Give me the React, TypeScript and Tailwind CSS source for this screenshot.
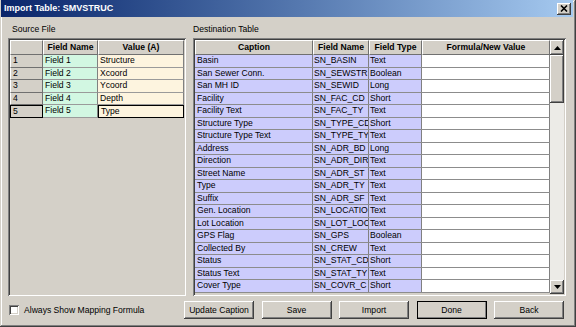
import React from "react";

const raised =
  "bg-[#d4d0c8] shadow-[inset_-1px_-1px_#404040,inset_1px_1px_#ffffff,inset_-2px_-2px_#808080,inset_2px_2px_#d4d0c8]";
const sunken =
  "shadow-[inset_1px_1px_#808080,inset_-1px_-1px_#ffffff,inset_2px_2px_#404040,inset_-2px_-2px_#d4d0c8]";

const srcRows = [
  ["1", "Field 1", "Structure"],
  ["2", "Field 2", "Xcoord"],
  ["3", "Field 3", "Ycoord"],
  ["4", "Field 4", "Depth"],
  ["5", "Field 5", "Type"],
];

const dstRows = [
  ["Basin", "SN_BASIN", "Text"],
  ["San Sewer Conn.", "SN_SEWSTR", "Boolean"],
  ["San MH ID", "SN_SEWID", "Long"],
  ["Facility", "SN_FAC_CD", "Short"],
  ["Facility Text", "SN_FAC_TY", "Text"],
  ["Structure Type", "SN_TYPE_CD", "Short"],
  ["Structure Type Text", "SN_TYPE_TY", "Text"],
  ["Address", "SN_ADR_BD", "Long"],
  ["Direction", "SN_ADR_DIR", "Text"],
  ["Street Name", "SN_ADR_ST", "Text"],
  ["Type", "SN_ADR_TY", "Text"],
  ["Suffix", "SN_ADR_SF", "Text"],
  ["Gen. Location", "SN_LOCATIO", "Text"],
  ["Lot Location", "SN_LOT_LOC", "Text"],
  ["GPS Flag", "SN_GPS", "Boolean"],
  ["Collected By", "SN_CREW", "Text"],
  ["Status", "SN_STAT_CD", "Short"],
  ["Status Text", "SN_STAT_TY", "Text"],
  ["Cover Type", "SN_COVR_C", "Short"],
];

function Head({ w, children }: { w: string; children?: React.ReactNode }) {
  return (
    <div
      className={`${w} h-[15px] shrink-0 flex items-center justify-center bg-[#d4d0c8] border-t border-l border-t-white border-l-white border-r border-b border-r-[#707070] border-b-[#707070] font-bold text-[8.6px] text-black overflow-hidden whitespace-nowrap`}
    >
      {children}
    </div>
  );
}

function Cell({
  w,
  bg,
  children,
  extra = "",
  pl = "pl-[2px]",
}: {
  w: string;
  bg: string;
  children?: React.ReactNode;
  extra?: string;
  pl?: string;
}) {
  return (
    <div
      className={`${w} ${bg} ${pl} h-full shrink-0 flex items-center border-r border-r-[#808080] overflow-hidden whitespace-nowrap text-[8.6px] text-black ${extra}`}
    >
      {children}
    </div>
  );
}

function Arrow({ down }: { down?: boolean }) {
  return (
    <svg width="7" height="4" viewBox="0 0 7 4">
      <polygon points={down ? "0,0 7,0 3.5,4" : "0,4 7,4 3.5,0"} fill="#000" />
    </svg>
  );
}

function Btn({ label, def }: { label: string; def?: boolean }) {
  return (
    <div
      className={`w-[70px] h-[18px] flex items-center justify-center text-[8.6px] text-black ${raised} ${
        def ? "outline outline-1 outline-black -outline-offset-1" : ""
      }`}
    >
      {label}
    </div>
  );
}

export default function App() {
  return (
    <div className="w-[576px] h-[327px] bg-[#d4d0c8] flex flex-col font-['Liberation_Sans',Arial,sans-serif] shadow-[inset_-1px_-1px_#404040,inset_1px_1px_#d4d0c8,inset_-2px_-2px_#808080,inset_2px_2px_#ffffff] overflow-hidden">
      {/* Title bar */}
      <div className="h-[17px] ml-[1px] mr-[3px] flex items-center justify-between bg-gradient-to-r from-[#0a246a] to-[#a6caf0] pl-[3px] pr-[2px]">
        <span className="text-white font-bold text-[9px] leading-none">Import Table: SMVSTRUC</span>
        <div className={`w-[14px] h-[12px] flex items-center justify-center ${raised}`}>
          <svg width="8" height="7" viewBox="0 0 8 7">
            <path d="M1 0.5 L7 6.5 M7 0.5 L1 6.5" stroke="#000" strokeWidth="1.6" />
          </svg>
        </div>
      </div>

      {/* Labels */}
      <div className="h-[21px] flex items-center text-[8.6px] text-black pt-[3px]">
        <span className="ml-[12px] w-[181px]">Source File</span>
        <span>Destination Table</span>
      </div>

      {/* Panels */}
      <div className="flex pl-[8px] gap-[7px]">
        {/* Source */}
        <div className={`w-[178px] h-[258px] p-[2px] ${sunken}`}>
          <div className="flex">
            <Head w="w-[33px]" />
            <Head w="w-[55px]">Field Name</Head>
            <Head w="w-[86px]">Value (A)</Head>
          </div>
          {srcRows.map((r, i) => {
            const sel = i === 4;
            return (
              <div key={r[0]} className="flex h-[12.5px]">
                <div
                  className={`w-[33px] h-full flex items-center pl-[2px] text-[8.6px] text-black bg-[#d4d0c8] ${
                    sel
                      ? "border border-black"
                      : "border-l border-l-white border-r border-r-[#707070] border-b border-b-[#707070]"
                  }`}
                >
                  {r[0]}
                </div>
                <Cell w="w-[55px]" bg="bg-[#d2f7e2]" extra="border-b border-b-[#9a9a9a]">
                  {r[1]}
                </Cell>
                <Cell
                  w="w-[86px]"
                  bg="bg-[#fdf4df]"
                  extra={sel ? "border border-black !border-black" : "border-b border-b-[#9a9a9a]"}
                >
                  {r[2]}
                </Cell>
              </div>
            );
          })}
        </div>

        {/* Destination */}
        <div className={`w-[373px] h-[258px] p-[2px] flex ${sunken}`}>
          <div className="w-[355px] flex flex-col">
            <div className="flex">
              <Head w="w-[118px]">Caption</Head>
              <Head w="w-[56px]">Field Name</Head>
              <Head w="w-[53px]">Field Type</Head>
              <Head w="w-[128px]">Formula/New Value</Head>
            </div>
            <div className="flex-1 overflow-hidden">
              {dstRows.map((r) => (
                <div key={r[0]} className="flex h-[12.5px] border-b border-b-[#8c8c8c]">
                  <Cell w="w-[118px]" bg="bg-[#ccccfc]">{r[0]}</Cell>
                  <Cell w="w-[56px]" bg="bg-[#ccccfc]" pl="pl-[1px]">{r[1]}</Cell>
                  <Cell w="w-[53px]" bg="bg-[#ccccfc]" pl="pl-[1px]">{r[2]}</Cell>
                  <Cell w="w-[128px]" bg="bg-white" />
                </div>
              ))}
            </div>
          </div>
          {/* Scrollbar */}
          <div className="w-[14px] flex flex-col bg-[#ecebe7]">
            <div className={`h-[15px] flex items-center justify-center ${raised}`}>
              <Arrow />
            </div>
            <div className={`h-[48px] ${raised}`} />
            <div className="flex-1" />
            <div className={`h-[14px] flex items-center justify-center ${raised}`}>
              <Arrow down />
            </div>
          </div>
        </div>
      </div>

      {/* Bottom */}
      <div className="flex items-center mt-[5px] pl-[9px] pr-[12px]">
        <div className="w-[10px] h-[10px] bg-white shadow-[inset_1px_1px_#808080,inset_-1px_-1px_#ffffff,inset_2px_2px_#404040,inset_-2px_-2px_#d4d0c8]" />
        <span className="ml-[5px] text-[8.6px] text-black">Always Show Mapping Formula</span>
        <div className="ml-auto flex gap-[7.5px]">
          <Btn label="Update Caption" />
          <Btn label="Save" />
          <Btn label="Import" />
          <Btn label="Done" def />
          <Btn label="Back" />
        </div>
      </div>
    </div>
  );
}
